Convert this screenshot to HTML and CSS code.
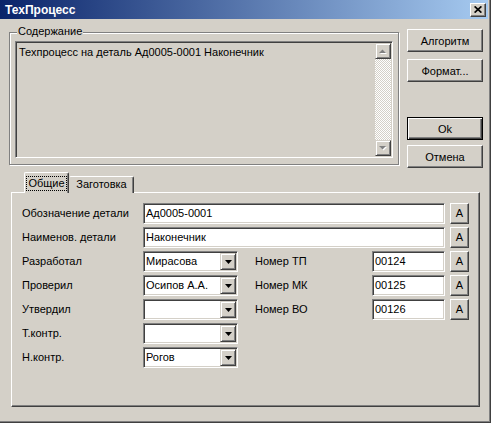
FILE: index.html
```html
<!DOCTYPE html>
<html>
<head>
<meta charset="utf-8">
<title>ТехПроцесс</title>
<link rel="stylesheet" href="styles.css">
</head>
<body>
<div class="window">
  <div class="titlebar">
    <span class="title">ТехПроцесс</span>
    <span class="close"><svg width="8" height="7" viewBox="0 0 8 7"><path d="M0.6 0.4 L7.4 6.6 M7.4 0.4 L0.6 6.6" stroke="#000" stroke-width="1.7" fill="none"/></svg></span>
  </div>
  <div class="content">
    <div class="top">
      <div class="group">
        <span class="group-label">Содержание</span>
        <div class="memo">
          <div class="memo-text">Техпроцесс на деталь Ад0005-0001 Наконечник</div>
          <div class="vscroll">
            <span class="sbtn"><svg width="8" height="5" viewBox="0 0 8 5"><path d="M1 5 L4.5 1.5 L8 5 Z" fill="#fff"/><path d="M0 4 L3.5 0.5 L7 4 Z" fill="#808080"/></svg></span>
            <span class="track"></span>
            <span class="sbtn"><svg width="8" height="5" viewBox="0 0 8 5"><path d="M1 1 L8 1 L4.5 4.5 Z" fill="#fff"/><path d="M0 0 L7 0 L3.5 3.5 Z" fill="#808080"/></svg></span>
          </div>
        </div>
      </div>
      <div class="side">
        <span class="btn">Алгоритм</span>
        <span class="btn">Формат...</span>
        <span class="btn default">Ok</span>
        <span class="btn">Отмена</span>
      </div>
    </div>
    <div class="tabs">
      <span class="tab active"><span class="focus">Общие</span></span>
      <span class="tab inactive">Заготовка</span>
    </div>
    <div class="panel">
      <div class="form">
        <span class="lbl">Обозначение детали</span>
        <span class="field wide">Ад0005-0001</span>
        <span class="abtn">A</span>

        <span class="lbl">Наименов. детали</span>
        <span class="field wide">Наконечник</span>
        <span class="abtn">A</span>

        <span class="lbl">Разработал</span>
        <span class="combo"><span class="combo-text">Мирасова</span><span class="combo-btn"><svg width="7" height="4" viewBox="0 0 7 4"><path d="M0 0 H7 L3.5 4 Z" fill="#000"/></svg></span></span>
        <span class="lbl2">Номер ТП</span>
        <span class="field">00124</span>
        <span class="abtn">A</span>

        <span class="lbl">Проверил</span>
        <span class="combo"><span class="combo-text">Осипов А.А.</span><span class="combo-btn"><svg width="7" height="4" viewBox="0 0 7 4"><path d="M0 0 H7 L3.5 4 Z" fill="#000"/></svg></span></span>
        <span class="lbl2">Номер МК</span>
        <span class="field">00125</span>
        <span class="abtn">A</span>

        <span class="lbl">Утвердил</span>
        <span class="combo"><span class="combo-text"></span><span class="combo-btn"><svg width="7" height="4" viewBox="0 0 7 4"><path d="M0 0 H7 L3.5 4 Z" fill="#000"/></svg></span></span>
        <span class="lbl2">Номер ВО</span>
        <span class="field">00126</span>
        <span class="abtn">A</span>

        <span class="lbl">Т.контр.</span>
        <span class="combo"><span class="combo-text"></span><span class="combo-btn"><svg width="7" height="4" viewBox="0 0 7 4"><path d="M0 0 H7 L3.5 4 Z" fill="#000"/></svg></span></span>

        <span class="lbl">Н.контр.</span>
        <span class="combo"><span class="combo-text">Рогов</span><span class="combo-btn"><svg width="7" height="4" viewBox="0 0 7 4"><path d="M0 0 H7 L3.5 4 Z" fill="#000"/></svg></span></span>
      </div>
    </div>
  </div>
</div>
</body>
</html>
```

FILE: styles.css
```css
* { box-sizing: border-box; }
html, body { margin: 0; padding: 0; }
body {
  width: 491px;
  height: 423px;
  background: #d4d0c8;
  font-family: "Liberation Sans", Arial, sans-serif;
  font-size: 11px;
  color: #000;
  overflow: hidden;
}
.window {
  width: 491px;
  height: 423px;
  padding-right: 3px;
  padding-bottom: 2px;
  box-shadow: inset -1px -1px 0 #404040, inset -2px -2px 0 #808080;
  display: flex;
  flex-direction: column;
}
.titlebar {
  height: 19px;
  flex: none;
  background: linear-gradient(to right, #0a246a, #a6caf0);
  display: flex;
  align-items: center;
  justify-content: space-between;
  padding: 0 2px 0 5px;
}
.title {
  color: #fff;
  font-weight: bold;
  font-size: 12px;
}
.close {
  width: 16px;
  height: 14px;
  background: #d4d0c8;
  border: 1px solid;
  border-color: #fff #404040 #404040 #fff;
  box-shadow: inset -1px -1px 0 #808080;
  display: flex;
  align-items: center;
  justify-content: center;
}
.content {
  padding: 10px 0 0 9px;
}
.top {
  display: flex;
  height: 139px;
}
.group {
  position: relative;
  margin-top: 3px;
  width: 390px;
  height: 133px;
  border: 1px solid #808080;
  box-shadow: inset 1px 1px 0 #fff, 1px 1px 0 #fff;
  padding: 8px 5px 6px 5px;
}
.group-label {
  position: absolute;
  top: -8px;
  left: 7px;
  padding: 0 1px;
  background: #d4d0c8;
  line-height: 13px;
}
.memo {
  display: flex;
  height: 100%;
  background: #d4d0c8;
  border: 1px solid;
  border-color: #808080 #fff #fff #808080;
  box-shadow: inset 1px 1px 0 #404040, inset -1px -1px 0 #d4d0c8;
  padding: 1px;
}
.memo-text {
  flex: 1;
  padding: 3px 0 0 2px;
  line-height: 13px;
}
.vscroll {
  width: 16px;
  display: flex;
  flex-direction: column;
}
.sbtn {
  height: 16px;
  flex: none;
  background: #d4d0c8;
  border: 1px solid;
  border-color: #d4d0c8 #404040 #404040 #d4d0c8;
  box-shadow: inset 1px 1px 0 #fff, inset -1px -1px 0 #808080;
  display: flex;
  align-items: center;
  justify-content: center;
}
.track {
  flex: 1;
  background-color: #d4d0c8;
  background-image: conic-gradient(#fff 25%, #d4d0c8 0 50%, #fff 0 75%, #d4d0c8 0);
  background-size: 2px 2px;
}
.side {
  margin-left: 8px;
  width: 76px;
  display: flex;
  flex-direction: column;
}
.btn {
  height: 23px;
  flex: none;
  background: #d4d0c8;
  border: 1px solid;
  border-color: #fff #404040 #404040 #fff;
  box-shadow: inset -1px -1px 0 #808080;
  display: flex;
  align-items: center;
  justify-content: center;
}
.btn + .btn { margin-top: 7px; }
.btn.default {
  margin-top: auto;
  border-color: #000;
  box-shadow: inset 1px 1px 0 #fff, inset -1px -1px 0 #404040, inset -2px -2px 0 #808080;
}
.btn.default + .btn { margin-top: 5px; }
.tabs {
  display: flex;
  align-items: flex-end;
  margin: 4px 0 -1px 15px;
  height: 21px;
  position: relative;
  z-index: 1;
}
.tab {
  background: #d4d0c8;
  border: 1px solid;
  border-bottom: none;
  border-color: #fff #404040 #404040 #fff;
  box-shadow: inset -1px 0 0 #808080;
  border-radius: 2px 2px 0 0;
  display: flex;
  justify-content: center;
  align-items: flex-start;
  line-height: 13px;
}
.tab.active {
  width: 45px;
  height: 21px;
  padding-top: 3px;
}
.tab.inactive {
  width: 65px;
  height: 17px;
  padding-top: 1px;
  border-left-color: #d4d0c8;
}
.focus {
  border: 1px dotted #000;
  padding: 0 1px;
}
.panel {
  margin-left: 2px;
  width: 469px;
  height: 215px;
  border: 1px solid;
  border-color: #fff #404040 #404040 #fff;
  box-shadow: inset -1px -1px 0 #808080;
  padding: 10px 0 0 10px;
}
.form {
  display: grid;
  grid-template-columns: 121px 95px 134px 73px 24px;
  grid-auto-rows: 21px;
  row-gap: 3px;
}
.lbl {
  grid-column: 1;
  line-height: 21px;
  white-space: nowrap;
}
.lbl2 {
  grid-column: 3;
  padding-left: 17px;
  line-height: 21px;
  white-space: nowrap;
}
.field {
  height: 21px;
  background: #fff;
  border: 1px solid;
  border-color: #808080 #fff #fff #808080;
  box-shadow: inset 1px 1px 0 #404040, inset -1px -1px 0 #d4d0c8;
  padding: 0 2px;
  line-height: 19px;
  white-space: nowrap;
  overflow: hidden;
}
.field.wide { grid-column: 2 / 5; }
.abtn {
  grid-column: 5;
  justify-self: end;
  width: 19px;
  height: 21px;
  background: #d4d0c8;
  border: 1px solid;
  border-color: #fff #404040 #404040 #fff;
  box-shadow: inset -1px -1px 0 #808080;
  display: flex;
  align-items: center;
  justify-content: center;
  line-height: 1;
}
.combo {
  grid-column: 2;
  height: 21px;
  display: flex;
  background: #fff;
  border: 1px solid;
  border-color: #808080 #fff #fff #808080;
  box-shadow: inset 1px 1px 0 #404040, inset -1px -1px 0 #d4d0c8;
  padding: 1px;
}
.combo-text {
  flex: 1;
  padding-left: 1px;
  line-height: 17px;
  white-space: nowrap;
}
.combo-btn {
  width: 16px;
  height: 17px;
  background: #d4d0c8;
  border: 1px solid;
  border-color: #d4d0c8 #404040 #404040 #d4d0c8;
  box-shadow: inset 1px 1px 0 #fff, inset -1px -1px 0 #808080;
  display: flex;
  align-items: center;
  justify-content: center;
}
```
